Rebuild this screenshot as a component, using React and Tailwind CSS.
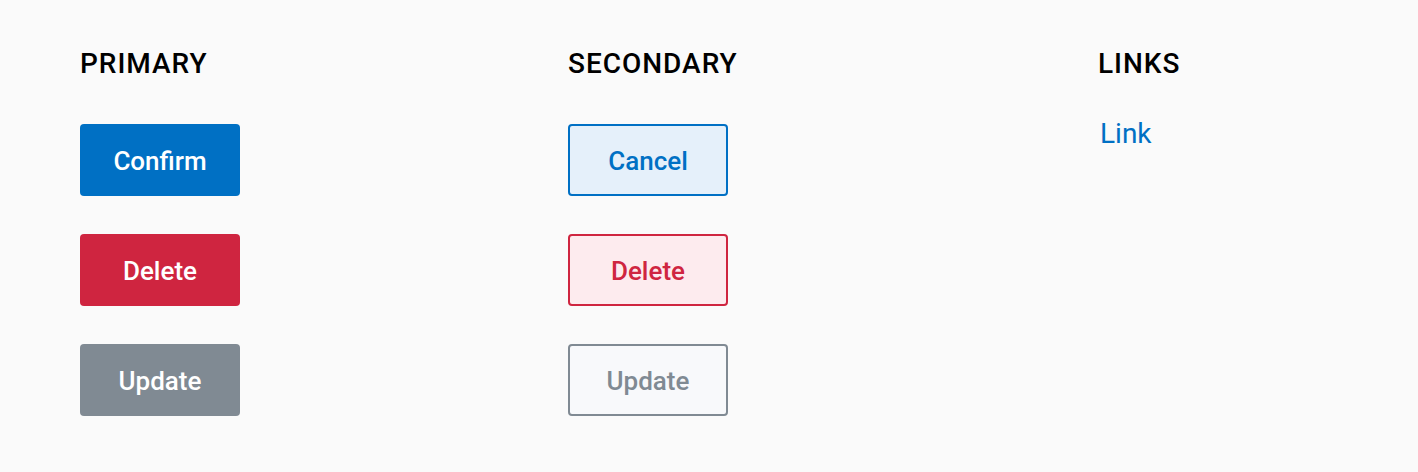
import React from "react";

const btn =
  "w-[160px] h-[72px] rounded-[4px] flex items-center justify-center text-[26px] leading-[32px] font-medium pt-[2px]";

const App = () => {
  return (
    <div className="w-full h-[472px] bg-[#fafafa] font-['Roboto',sans-serif]">
      <div className="flex pl-[80px] pt-[48px]">
        <div className="w-[488px]">
          <h2 className="text-[28px] leading-[32px] font-medium tracking-[0.035em] text-black">PRIMARY</h2>
          <div className="flex flex-col gap-[38px] mt-[44px]">
            <button className={btn + " bg-[#0070c4] text-white"}>Confirm</button>
            <button className={btn + " bg-[#cf2540] text-white"}>Delete</button>
            <button className={btn + " bg-[#808a93] text-white"}>Update</button>
          </div>
        </div>
        <div className="w-[530px]">
          <h2 className="text-[28px] leading-[32px] font-medium tracking-[0.035em] text-black">SECONDARY</h2>
          <div className="flex flex-col gap-[38px] mt-[44px]">
            <button className={btn + " border-2 border-[#0070c4] bg-[#e5f0fa] text-[#0070c4]"}>Cancel</button>
            <button className={btn + " border-2 border-[#cf2540] bg-[#fdebee] text-[#cf2540]"}>Delete</button>
            <button className={btn + " border-2 border-[#808a93] bg-[#f8f9fb] text-[#808a93]"}>Update</button>
          </div>
        </div>
        <div>
          <h2 className="text-[28px] leading-[32px] font-medium tracking-[0.035em] text-black">LINKS</h2>
          <a href="#" className="block mt-[38px] ml-[2px] text-[28px] leading-[32px] text-[#0070c4]">Link</a>
        </div>
      </div>
    </div>
  );
};

export default App;
